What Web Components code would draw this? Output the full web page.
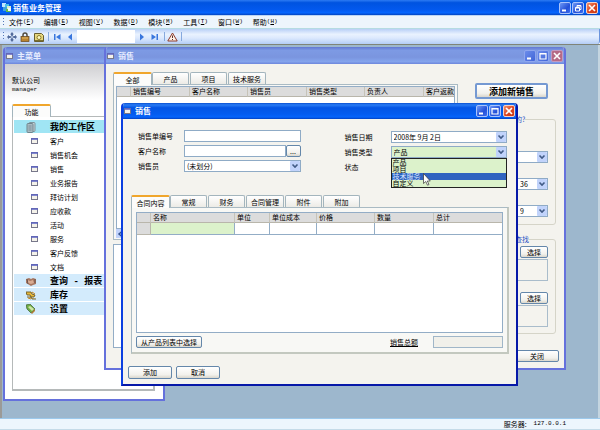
<!DOCTYPE html>
<html lang="zh-CN">
<head>
<meta charset="utf-8">
<title>销售业务管理</title>
<style>
html,body{margin:0;height:100%}
body{font:7px/10px "Noto Sans CJK SC",sans-serif;color:#000}
</style>
</head>
<body>
<app-shell></app-shell>
<script>
const BASE = `
*{box-sizing:border-box}
button,input,select{font:inherit;color:inherit;margin:0;padding:0;border:0;border-radius:0;outline:0;background:none;appearance:none}
svg{display:block}
.m{font-family:"Liberation Mono",monospace;font-size:6px}
`;
function define(name, css, html, ready) {
  customElements.define(name, class extends HTMLElement {
    connectedCallback() {
      if (this.shadowRoot) return;
      const root = this.attachShadow({ mode: 'open' });
      const markup = typeof html === 'function' ? html(this) : html;
      root.innerHTML = `<style>${BASE}${css}</style>${markup}`;
      if (ready) ready(this, root);
    }
  });
}
const attr = (el, n) => el.getAttribute(n) || '';
const list = (el, n) => attr(el, n) ? attr(el, n).split('|') : [];
const WIN_ICON = `<svg width="7" height="6" viewBox="0 0 7 6"><rect x=".5" y=".5" width="6" height="5" fill="#f4f2ea" stroke="#77778a"/><path d="M0 1h7" stroke="#5b62c4" stroke-width="1.6"/></svg>`;

define('win-controls', `
:host{display:flex;gap:1px}
button{width:12px;height:12px;border:1px solid #a9c3fb;border-radius:2px;background:linear-gradient(135deg,#6d97f5,#2350d8 60%,#3b6df0);display:grid;place-items:center}
button.x{background:linear-gradient(135deg,#f0906c,#dc4520 55%,#c93a14);border-color:#f6d0c4;margin-left:1px}
:host([muted]) button{border-color:#8fa6ee;background:linear-gradient(135deg,#6b8cea,#4165d8)}
:host([muted]) button.x{background:#b56a86;border-color:#c39ac0}
`, el => `
<button aria-label="最小化"><svg width="10" height="10"><path d="M2 7.5h4" stroke="#fff" stroke-width="2"/></svg></button>
<button aria-label="最大化"><svg width="10" height="10">${el.hasAttribute('restore')
  ? '<path d="M4 4V2.500h4v4H6.500M2.500 4.500h4v3.500h-4zM2.500 5h4M4 3h4" fill="none" stroke="#fff"/>'
  : '<path d="M2 2.500h6v5.500H2zM2 3h6" fill="none" stroke="#fff" stroke-width="1.200"/>'}</svg></button>
<button class="x" aria-label="关闭"><svg width="10" height="10"><path d="M2 2l6 6M8 2l-6 6" stroke="#fff" stroke-width="1.600"/></svg></button>`);

define('app-title', `
:host{display:flex;align-items:center;height:15px;padding:0 2px 0 2px;background:linear-gradient(#2d7bf3,#0053e0 18%,#0359ee 65%,#0566ff 85%,#0344c0);color:#fff;flex:none}
h1{margin:0 auto 0 1px;font-size:8px;line-height:12px;font-weight:700}
`, `<svg width="10" height="11" viewBox="0 0 10 11"><path d="M0 1h4v4H0z" fill="#bfe6ff"/><path d="M3 2h4v4H3z" fill="#49c0e8"/><path d="M1 5h4v4H1z" fill="#3da4dd"/><path d="M5 4h4v4H5z" fill="#d8f0c8"/><path d="M4 7h5v3H4z" fill="#62b84c"/><path d="M6 6h3v3H6z" fill="#f3f7ff"/></svg>
<h1>销售业务管理</h1><win-controls restore></win-controls>`);

define('app-menu', `
:host{display:flex;align-items:center;height:14px;padding-left:3px;background:#edf5fc;border-bottom:1px solid #b5dbe2;border-top:1px solid #bcd5f3;flex:none}
i{width:1px;height:8px;margin-right:5px;background:repeating-linear-gradient(#5276b8 0 1px,transparent 1px 3px)}
nav{display:flex;gap:10px}
button{display:flex;line-height:10px;white-space:nowrap}
`, `<i></i><nav>${['文件F','编辑E','视图V','数据D','模块M','工具T','窗口W','帮助H'].map(t =>
  `<button>${t.slice(0, 2)}<span class="m">(<u>${t[2]}</u>)</span></button>`).join('')}</nav>`);

define('app-toolbar', `
:host{display:flex;align-items:center;height:15px;padding-left:3px;background:linear-gradient(#b9d0f6,#e9f2fe 35%,#dce9fd 60%,#b4cdf6);border-right:1px solid #6b94dc;border-radius:0 0 3px 0;flex:none}
i{width:1px;height:9px;background:repeating-linear-gradient(#5276b8 0 1px,transparent 1px 3px);margin-right:1px}
b{width:1px;height:9px;background:#86a9de;margin:0 1px 0 2px}
button{width:14px;height:13px;display:grid;place-items:center}
button.n{width:13px}
input{width:58px;height:13px;background:#fff}
`, `<i></i>
<button class="n" aria-label="移动"><svg width="10" height="10" viewBox="0 0 10 10"><path d="M5 0l2 2.500H6V4h2V2.800L10 5 8 7.200V6H6v1.500h1L5 10 3 7.500h1V6H2v1.200L0 5l2-2.200V4h2V2.500H3z" fill="#536b9c"/><circle cx="5" cy="5" r="1.500" fill="#a8b9d6"/></svg></button>
<button aria-label="锁定"><svg width="10" height="10" viewBox="0 0 10 10"><path d="M3 5V3a2 2 0 014 0v2" fill="none" stroke="#514b42" stroke-width="1.500"/><rect x="1" y="4.500" width="8" height="5" fill="#b98332" stroke="#65451b" stroke-width=".7"/><path d="M2 6h6" stroke="#e3b762"/></svg></button>
<button aria-label="图片"><svg width="10" height="10" viewBox="0 0 10 10"><path d="M.5 1.500h7l2 2v6h-9z" fill="#e7d77e" stroke="#685f30"/><circle cx="5" cy="5.500" r="2" fill="#fffac0" stroke="#8b7b2c"/><path d="M1 8.500h8" stroke="#7d7030"/></svg></button>
<b></b>
<button class="n" aria-label="第一条"><svg width="8" height="8" viewBox="0 0 8 8"><path d="M1 1h1.500v6H1zM7.500 1v6L3 4z" fill="#3976dd"/></svg></button>
<button aria-label="上一条"><svg width="6" height="8" viewBox="0 0 6 8"><path d="M5 .5v7L1 4z" fill="#3976dd"/></svg></button>
<input aria-label="记录">
<button class="n" aria-label="下一条"><svg width="6" height="8" viewBox="0 0 6 8"><path d="M1 .5v7L5 4z" fill="#3976dd"/></svg></button>
<button aria-label="最后一条"><svg width="8" height="8" viewBox="0 0 8 8"><path d="M5.500 1H7v6H5.500zM.5 1v6L5 4z" fill="#3976dd"/></svg></button>
<b></b>
<button class="n" aria-label="警告"><svg width="11" height="10" viewBox="0 0 11 10"><path d="M5.500 1l4.700 8H.8z" fill="#fff1e6" stroke="#8b3a2c"/><path d="M5.500 3.500V6M5.500 7v1" stroke="#57302a"/></svg></button>
<b></b>`);

define('mdi-window', `
:host{display:flex;flex-direction:column;border:2px solid #6571dc;border-top:0;border-radius:4px 4px 0 0;background:#f4f3ee;overflow:hidden}
:host([active]){border-color:#0b3fe0 #0618a8 #0618a8 #0b3fe0}
header{display:flex;align-items:center;height:17px;flex:none;margin:0 -2px;padding:0 3px 0 3px;background:linear-gradient(#6277d3,#7d9ae4 20%,#7a95df 60%,#84a4ec 85%,#6d86dc);color:#fff}
:host([active]) header{height:16px;background:linear-gradient(#0a4fd0,#2a7cf5 12%,#0455e4 30%,#045cf0 70%,#0664fb 88%,#0340c0)}
h2{margin:0 auto 0 4px;font-size:8px;line-height:12px;font-weight:700;color:#e6ecff}
:host([active]) h2{color:#fff}
main{flex:1;min-height:0;display:flex;flex-direction:column}
`, el => `<header>${WIN_ICON}<h2>${attr(el, 'heading')}</h2><win-controls ${el.hasAttribute('active') ? '' : 'muted'}></win-controls></header><main><slot></slot></main>`);

define('xp-button', `
:host{display:block;height:12px}
button{width:100%;height:100%;border:1px solid #6487aa;border-radius:2px;background:linear-gradient(#fff,#f2f1ec 70%,#d9d6cc);line-height:9px;white-space:nowrap;display:grid;place-items:center}
:host([strong]) button{font-size:9px;font-weight:700;border:2px solid #7599d2}
`, `<button><slot></slot></button>`);

const CHIP = `<svg class="chip" width="10" height="10" viewBox="0 0 10 10"><rect width="10" height="10" rx="1" fill="#c1d3fb"/><path d="M2.500 3.500L5 6l2.500-2.500" fill="none" stroke="#415b86" stroke-width="1.600"/></svg>`;
define('xp-field', `
:host{display:grid;grid-template-columns:46px minmax(0,1fr);align-items:center;height:12px;position:relative}
:host([bare]){grid-template-columns:minmax(0,1fr)}
label{white-space:nowrap}
.box{display:grid;grid-template-columns:minmax(0,1fr) auto;align-items:center;height:12px}
.box>*{grid-row:1}
input,select{width:100%;height:12px;background:#fff;border:1px solid #8fabc6;line-height:10px;padding-left:2px}
:host([bare]) select{padding-left:4px}
select,.date{grid-column:1/3}
.chip{grid-column:2;margin-right:1px;pointer-events:none}
:host([green]) select{background:#dcf2cb}
ul{position:absolute;z-index:5;left:46px;right:0;top:12px;margin:0;padding:0;list-style:none;border:1px solid #222;background:#dcf2cb}
li{height:7px;line-height:7px;padding-left:1px;white-space:nowrap}
li.on{background:#2f63c0;color:#d7e4ff}
xp-button{width:15px}
.cursor{position:absolute;z-index:6;left:78px;top:27px}
`, el => {
  const kind = attr(el, 'kind'), label = attr(el, 'label'), v = attr(el, 'value');
  const bare = el.hasAttribute('bare');
  const lab = bare ? '' : `<label for="c">${label}</label>`;
  const a = bare ? `aria-label="${label}"` : '';
  if (kind === 'none') return `<span>${label}</span>`;
  const opts = list(el, 'options');
  let box;
  if (kind === 'select') box = `<select id="c" ${a}>${(opts.length ? opts : [v]).map(o => `<option ${o === v ? 'selected' : ''}>${o}</option>`).join('')}</select>${CHIP}`;
  else if (kind === 'date') box = `<input id="c" class="date" value="${v}">${CHIP}`;
  else if (kind === 'lookup') box = `<input id="c"><xp-button>...</xp-button>`;
  else box = `<input id="c" class="date" ${a}>`;
  const over = opts.length ? `<ul role="listbox">${opts.map(o => `<li role="option" class="${o === attr(el, 'hover') ? 'on' : ''}">${o}</li>`).join('')}</ul>
  <svg class="cursor" width="8" height="13" viewBox="0 0 8 13"><path d="M.5.5v10l2.300-2 1.700 3.700 1.500-.7-1.700-3.500h3z" fill="#fff" stroke="#333" stroke-width=".7"/></svg>` : '';
  return `${lab}<div class="box">${box}</div>${over}`;
});

define('xp-tabs', `
:host{display:flex;gap:1px;height:12px;flex:none;position:relative}
button{min-width:37px;padding:0 4px;height:12px;border:1px solid #a3b5bd;border-bottom:0;border-radius:2px 2px 0 0;background:linear-gradient(#fff,#ecebe6);line-height:10px;white-space:nowrap}
button.on{min-width:39px;height:13px;border-top:2px solid #f0a62c;background:#fcfcfb;z-index:1;margin-right:-1px}
`, el => list(el, 'tabs').map((t, i) => `<button role="tab" aria-selected="${!i}" class="${i ? '' : 'on'}">${t}</button>`).join(''));

define('data-grid', `
:host{display:block;background:#fff;border:1px solid #93adc6;overflow:hidden}
table{border-collapse:separate;border-spacing:0;table-layout:fixed;width:100%}
th{height:10px;padding:0 0 0 2px;text-align:left;font-weight:400;line-height:9px;background:#dcdcdc;border-right:1px solid #c6c3b8;border-bottom:1px solid #b9b6ab;white-space:nowrap;overflow:hidden}
th:last-child,td:last-child{border-right:0}
td{height:12px;padding:0;border-right:1px solid #93adc6;border-bottom:1px solid #93adc6}
td:first-child{background:#dcdcdc;border-color:#b9b6ab}
td:nth-child(2){background:#dcf2cb}
`, el => {
  const cols = list(el, 'columns'), w = list(el, 'widths');
  return `<table><colgroup><col style="width:14px">${cols.map((c, i) => `<col ${w[i] ? `style="width:${w[i]}"` : ''}>`).join('')}</colgroup>
<thead><tr><th></th>${cols.map(c => `<th>${c}</th>`).join('')}</tr></thead>
${el.hasAttribute('entry') ? `<tbody><tr><td></td>${cols.map(() => '<td></td>').join('')}</tr></tbody>` : ''}</table>`;
});

const NAV_ICONS = {
  work: '<svg width="10" height="11" viewBox="0 0 10 11"><rect x="3" y=".5" width="6" height="9" rx="1" fill="#c8d4d8" stroke="#7f959d"/><rect x="1" y="1.500" width="6" height="9" rx="1" fill="#a9bcc3" stroke="#71868e"/><path d="M2.500 4h3M2.500 6h3M2.500 8h3" stroke="#6a7d88" stroke-width=".7"/></svg>',
  query: '<svg width="10" height="9" viewBox="0 0 10 9"><path d="M0 2l3-1 2 1 2-1 3 1v5L7 8 5 9 0 6z" fill="#a87862"/><path d="M2 3l2 1 3-1 1 3-3 1-3-1z" fill="#d9ac93"/><path d="M1 2l1 5M9 2v4" stroke="#5c4a46" stroke-width=".8"/></svg>',
  stock: '<svg width="10" height="9" viewBox="0 0 10 9"><path d="M0 1h5l1 2 3 1-1 2H5L4 4H1zM1 6h4l1 2h4" fill="#e6b93d" stroke="#6e5a22" stroke-width=".9"/><path d="M6 1l3 2M2 7l3 1" stroke="#c6831c"/></svg>',
  setup: '<svg width="10" height="10" viewBox="0 0 10 10"><path d="M0 1l4-1 5 5-4 4-4-4z" fill="#6fae45" stroke="#3f5c35" stroke-width=".7"/><path d="M2 3l4 4 2-2-4-3z" fill="#cfe6a8"/><path d="M5 9l4-4v2L6 10z" fill="#b47c34"/></svg>'
};
define('nav-list', `
:host{display:block;padding:3px 1px 0}
nav{display:flex;flex-direction:column}
button{display:grid;grid-template-columns:20px auto;column-gap:5px;align-items:center;justify-content:start;height:14px;padding-left:11px;text-align:left;white-space:nowrap}
button>span:first-child{padding-left:6px}
.s{font-size:9px;line-height:12px;font-weight:700;background:linear-gradient(#d3ebfc,#d3ebfc) 0 0/100% 13px no-repeat}
.s>span:first-child{padding-left:1px}
.s.on{background-image:linear-gradient(#a0e5f4,#a0e5f4)}
.s .m{font-size:9px}
`, () => {
  const sec = (k, t, on) => `<button class="s ${on || ''}"><span>${NAV_ICONS[k]}</span><span>${t}</span></button>`;
  return `<nav>${sec('work', '我的工作区', 'on')}${['客户','销售机会','销售','业务报告','拜访计划','应收款','活动','服务','客户反馈','文档'].map(t =>
    `<button><span>${WIN_ICON}</span><span>${t}</span></button>`).join('')}${sec('query', '查询<span class="m">&nbsp;-&nbsp;</span>报表')}${sec('stock', '库存')}${sec('setup', '设置')}</nav>`;
});

define('main-menu', `
:host{display:flex;flex-direction:column;flex:1;padding:11px 8px 8px 7px;background:linear-gradient(#cfcfd2,#fff 36px)}
p{margin:0;line-height:10px}
.m{display:block}
xp-tabs{margin-top:9px}
.panel{flex:1;border:1px solid #b5b9b9;border-right-width:2px;border-bottom-width:2px;background:#fff}
`, `<p>默认公司<span class="m">manager</span></p><xp-tabs tabs="功能"></xp-tabs><div class="panel"><nav-list></nav-list></div>`);

define('group-box', `
:host{display:block}
fieldset{margin:0;border:1px solid #d5d4c8;border-radius:3px;padding:0 7px 0 39px;min-width:0;height:100%}
legend{padding:0;color:#1f4fc4;line-height:10px;white-space:nowrap}
`, el => `<fieldset><legend>${attr(el, 'heading')}</legend><slot></slot></fieldset>`);

define('sales-list', `
:host{display:flex;flex-direction:column;flex:1;padding:8px 5px 6px 7px}
.cols{flex:1;display:grid;grid-template-columns:minmax(0,1fr) 81px;column-gap:17px;padding-right:3px}
.left,.right{display:flex;flex-direction:column}
.panel{flex:3;border:1px solid #a9bac3;padding:1px 2px;background:#f8f8f5;display:flex;flex-direction:column}
.panel data-grid{flex:1}
.scroll{width:10px;height:9px;background:#c1d3fb;display:grid;place-items:center}
.box{flex:2;margin-top:4px;border:1px solid #93adc6;background:#fff}
.add{width:73px;height:16px;margin-top:11px}
group-box{margin-top:15px}
group-box+group-box{margin-top:9px}
.a{padding:27px 0 7px;display:flex;flex-direction:column;gap:15px}
.b{padding:2px 0 6px;display:grid;justify-items:end}
.b xp-button{width:28px}
.well{width:100%;height:22px;border:1px solid #a9bccb;margin:1px 0 11px}
.well:last-child{margin-bottom:0}
.close{width:44px;margin:2px 0 0 auto}
`, `<div class="cols"><div class="left">
<xp-tabs tabs="全部|产品|项目|技术服务"></xp-tabs>
<div class="panel"><data-grid columns="销售编号|客户名称|销售员|销售类型|负责人|客户返款" widths="59px|58px|59px|58px|59px"></data-grid>
<button class="scroll" aria-label="向左"><svg width="8" height="8"><path d="M5.500 1L2 4l3.500 3" fill="none" stroke="#35548f" stroke-width="1.500"/></svg></button></div>
<div class="box"></div></div>
<div class="right"><xp-button class="add" strong>添加新销售</xp-button>
<group-box heading="的?"><div class="a"><xp-field bare kind="select" label="条件"></xp-field><xp-field bare kind="select" label="月" value="36"></xp-field><xp-field bare kind="select" label="日" value="9"></xp-field></div></group-box>
<group-box heading="查找"><div class="b"><xp-button>选择</xp-button><div class="well"></div><xp-button>选择</xp-button><div class="well"></div></div></group-box>
</div></div><xp-button class="close">关闭</xp-button>`);

define('sales-form', `
:host{display:flex;flex-direction:column;flex:1;padding:11px 7px 5px}
.form{display:grid;grid-template-columns:1fr 1fr;column-gap:44px;padding:0 2px 0 8px}
.form>div{display:flex;flex-direction:column;gap:3px}
.form>div+div{padding-top:1px}
xp-tabs{margin:22px 0 0 1px}
.panel{flex:1;display:flex;flex-direction:column;margin-left:1px;padding:4px;border:1px solid #a9bac3;border-right:2px solid #c3c8bf;border-bottom:2px solid #c3c8bf;background:#f8f8f5}
data-grid{flex:1}
.foot{display:flex;align-items:center;margin-top:3px}
.foot xp-button{width:66px}
.foot label{margin-left:auto;text-decoration:underline}
.foot input{width:70px;height:12px;margin-left:15px;border:1px solid #a0b6c8;background:#f1f0ea}
.actions{display:flex;gap:4px;margin:12px 0 0 -2px}
.actions xp-button{width:44px;height:13px}
`, `<div class="form"><div>
<xp-field label="销售单编号"></xp-field><xp-field kind="lookup" label="客户名称"></xp-field><xp-field kind="select" label="销售员" value="(未划分)"></xp-field>
</div><div>
<xp-field kind="date" label="销售日期" value="2008年 9月 2日"></xp-field>
<xp-field green kind="select" label="销售类型" value="产品" options="产品|项目|技术服务|自定义" hover="技术服务"></xp-field>
<xp-field kind="none" label="状态"></xp-field></div></div>
<xp-tabs tabs="合同内容|常规|财务|合同管理|附件|附加"></xp-tabs>
<div class="panel"><data-grid entry columns="名称|单位|单位成本|价格|数量|总计" widths="23%|35px|47px|58px|59px"></data-grid>
<div class="foot"><xp-button>从产品列表中选择</xp-button><label for="total">销售总额</label><input id="total" readonly></div></div>
<div class="actions"><xp-button>添加</xp-button><xp-button>取消</xp-button></div>`);

define('status-bar', `
:host{display:flex;align-items:center;justify-content:flex-end;gap:7px;height:12px;padding-right:34px;background:#edf6fd;border-top:1px solid #9cc9ec;border-bottom:1px solid #c5dbe8;flex:none}
`, `<span>服务器:</span><span class="m">127.0.0.1</span>`);

define('app-shell', `
:host{display:flex;flex-direction:column;height:100vh;overflow:hidden}
.desk{flex:1;position:relative;overflow:hidden;background:#9db7cd;border-top:1px solid #7f8478;box-shadow:inset 2px 0 #9b9a97,inset -2px 0 #c4d5e0}
mdi-window{position:absolute}
.w1{left:3px;width:162px;top:2px;bottom:17px}
.w2{left:104px;right:34px;top:2px;bottom:48px}
.w3{left:121px;right:82px;top:58px;bottom:32px}
`, `<app-title></app-title><app-menu></app-menu><app-toolbar></app-toolbar>
<div class="desk">
<mdi-window class="w1" heading="主菜单"><main-menu></main-menu></mdi-window>
<mdi-window class="w2" heading="销售"><sales-list></sales-list></mdi-window>
<mdi-window class="w3" heading="销售" active><sales-form></sales-form></mdi-window>
</div><status-bar></status-bar>`);
</script>
</body>
</html>
